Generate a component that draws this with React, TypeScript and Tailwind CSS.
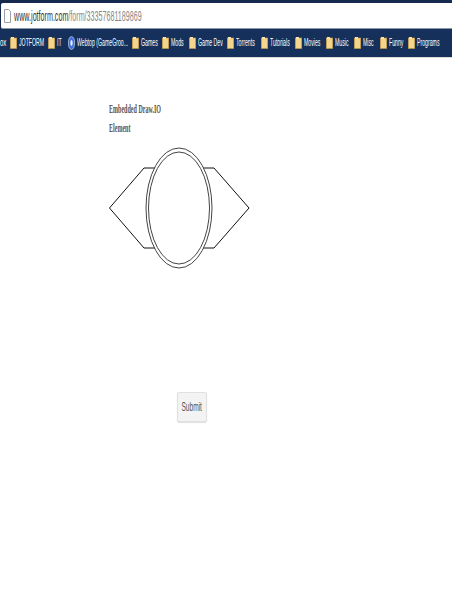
const bookmarks = [
  { label: 'JOTFORM', width: 'w-[24px]' },
  { label: 'IT', width: 'w-[6px]' },
  { label: 'Webtop (GameGroo...', width: 'w-[50px]', globe: true },
  { label: 'Games', width: 'w-[16px]' },
  { label: 'Mods', width: 'w-[13px]' },
  { label: 'Game Dev', width: 'w-[24px]' },
  { label: 'Torrents', width: 'w-[20px]' },
  { label: 'Tutorials', width: 'w-[20px]' },
  { label: 'Movies', width: 'w-[17px]' },
  { label: 'Music', width: 'w-[14px]' },
  { label: 'Misc', width: 'w-[12px]' },
  { label: 'Funny', width: 'w-[14px]' },
  { label: 'Programs', width: 'w-[23px]' },
];

const FolderIcon = () => (
  <svg width="7" height="12" viewBox="0 0 7 12" className="shrink-0">
    <rect x="0.3" y="1" width="6.4" height="10.5" fill="#f5d58c" stroke="#c99a45" strokeWidth="0.6" />
    <rect x="1" y="0" width="3" height="2" fill="#f7e2ad" />
  </svg>
);

const GlobeIcon = () => (
  <svg width="7" height="14" viewBox="0 0 7 14" className="shrink-0">
    <ellipse cx="3.5" cy="7" rx="3.2" ry="6.5" fill="#3f6fd8" stroke="#c9d6f5" strokeWidth="0.7" />
    <ellipse cx="3.5" cy="7" rx="1.2" ry="3" fill="#e6ecfb" />
  </svg>
);

const Diagram = () => (
  <svg width="141" height="122" viewBox="0 0 141 122" className="block" fill="none">
    <path d="M46 21H35L0.5 61L35 101H46" stroke="#111" strokeWidth="1" />
    <path d="M94 21H105L140 61L105 101H94" stroke="#111" strokeWidth="1" />
    <ellipse cx="70" cy="61" rx="33" ry="60" fill="#fff" stroke="#444" strokeWidth="1" />
    <ellipse cx="70" cy="61" rx="30.5" ry="56" fill="#fff" stroke="#444" strokeWidth="1" />
  </svg>
);

export default function App() {
  return (
    <div className="flex h-[600px] w-[452px] flex-col overflow-hidden bg-white font-['Liberation_Sans',sans-serif]">
      <div className="h-[3px] bg-[#16294f]" />
      <div className="bg-[#16294f] pl-[1px]">
        <div className="flex h-[26px] items-center gap-[3px] rounded-l-[2px] border-b border-[#8d96a6] bg-white pl-[3px]">
          <svg width="7" height="14" viewBox="0 0 7 14" className="shrink-0">
            <path d="M.5.5h4l2 2v11h-6z" fill="#fff" stroke="#9aa0a8" />
          </svg>
          <div className="origin-left scale-x-[0.51] whitespace-nowrap text-[14px] leading-none text-[#333]">
            www.jotform.com<span className="text-[#888]">/form/33357681189869</span>
          </div>
        </div>
      </div>
      <div className="flex h-[28px] items-center overflow-hidden bg-[#15305a] text-white">
        <span className="w-[10px] shrink-0 overflow-hidden text-[10px] leading-none">
          <span className="inline-block origin-left scale-x-[0.6]">ox</span>
        </span>
        <div className="flex items-center gap-[5px]">
          {bookmarks.map((b) => (
            <div key={b.label} className="flex shrink-0 items-center gap-[2px]">
              {b.globe ? <GlobeIcon /> : <FolderIcon />}
              <div className={`${b.width} whitespace-nowrap text-[10px] leading-none`}>
                <span className="inline-block origin-left scale-x-[0.52]">{b.label}</span>
              </div>
            </div>
          ))}
        </div>
      </div>
      <div className="h-px bg-[#d9d9d9]" />
      <div className="flex flex-col pl-[109px] pt-[41px]">
        <div className="font-['Liberation_Serif',serif] text-[13px] font-bold leading-[19px] text-[#5f5348]">
          <div className="origin-left scale-x-[0.465] whitespace-nowrap">Embedded Draw.IO</div>
          <div className="origin-left scale-x-[0.465]">Element</div>
        </div>
        <div className="mt-[10px]">
          <Diagram />
        </div>
        <div className="ml-[68px] mt-[123px]">
          <button className="flex h-[30px] w-[30px] items-center justify-center rounded-[2px] border border-[#e0e0e0] bg-[#f3f3f3] text-[12px] text-[#555] shadow-[0_1px_1px_rgba(0,0,0,0.12)]">
            <span className="inline-block scale-x-[0.55]">Submit</span>
          </button>
        </div>
      </div>
    </div>
  );
}
